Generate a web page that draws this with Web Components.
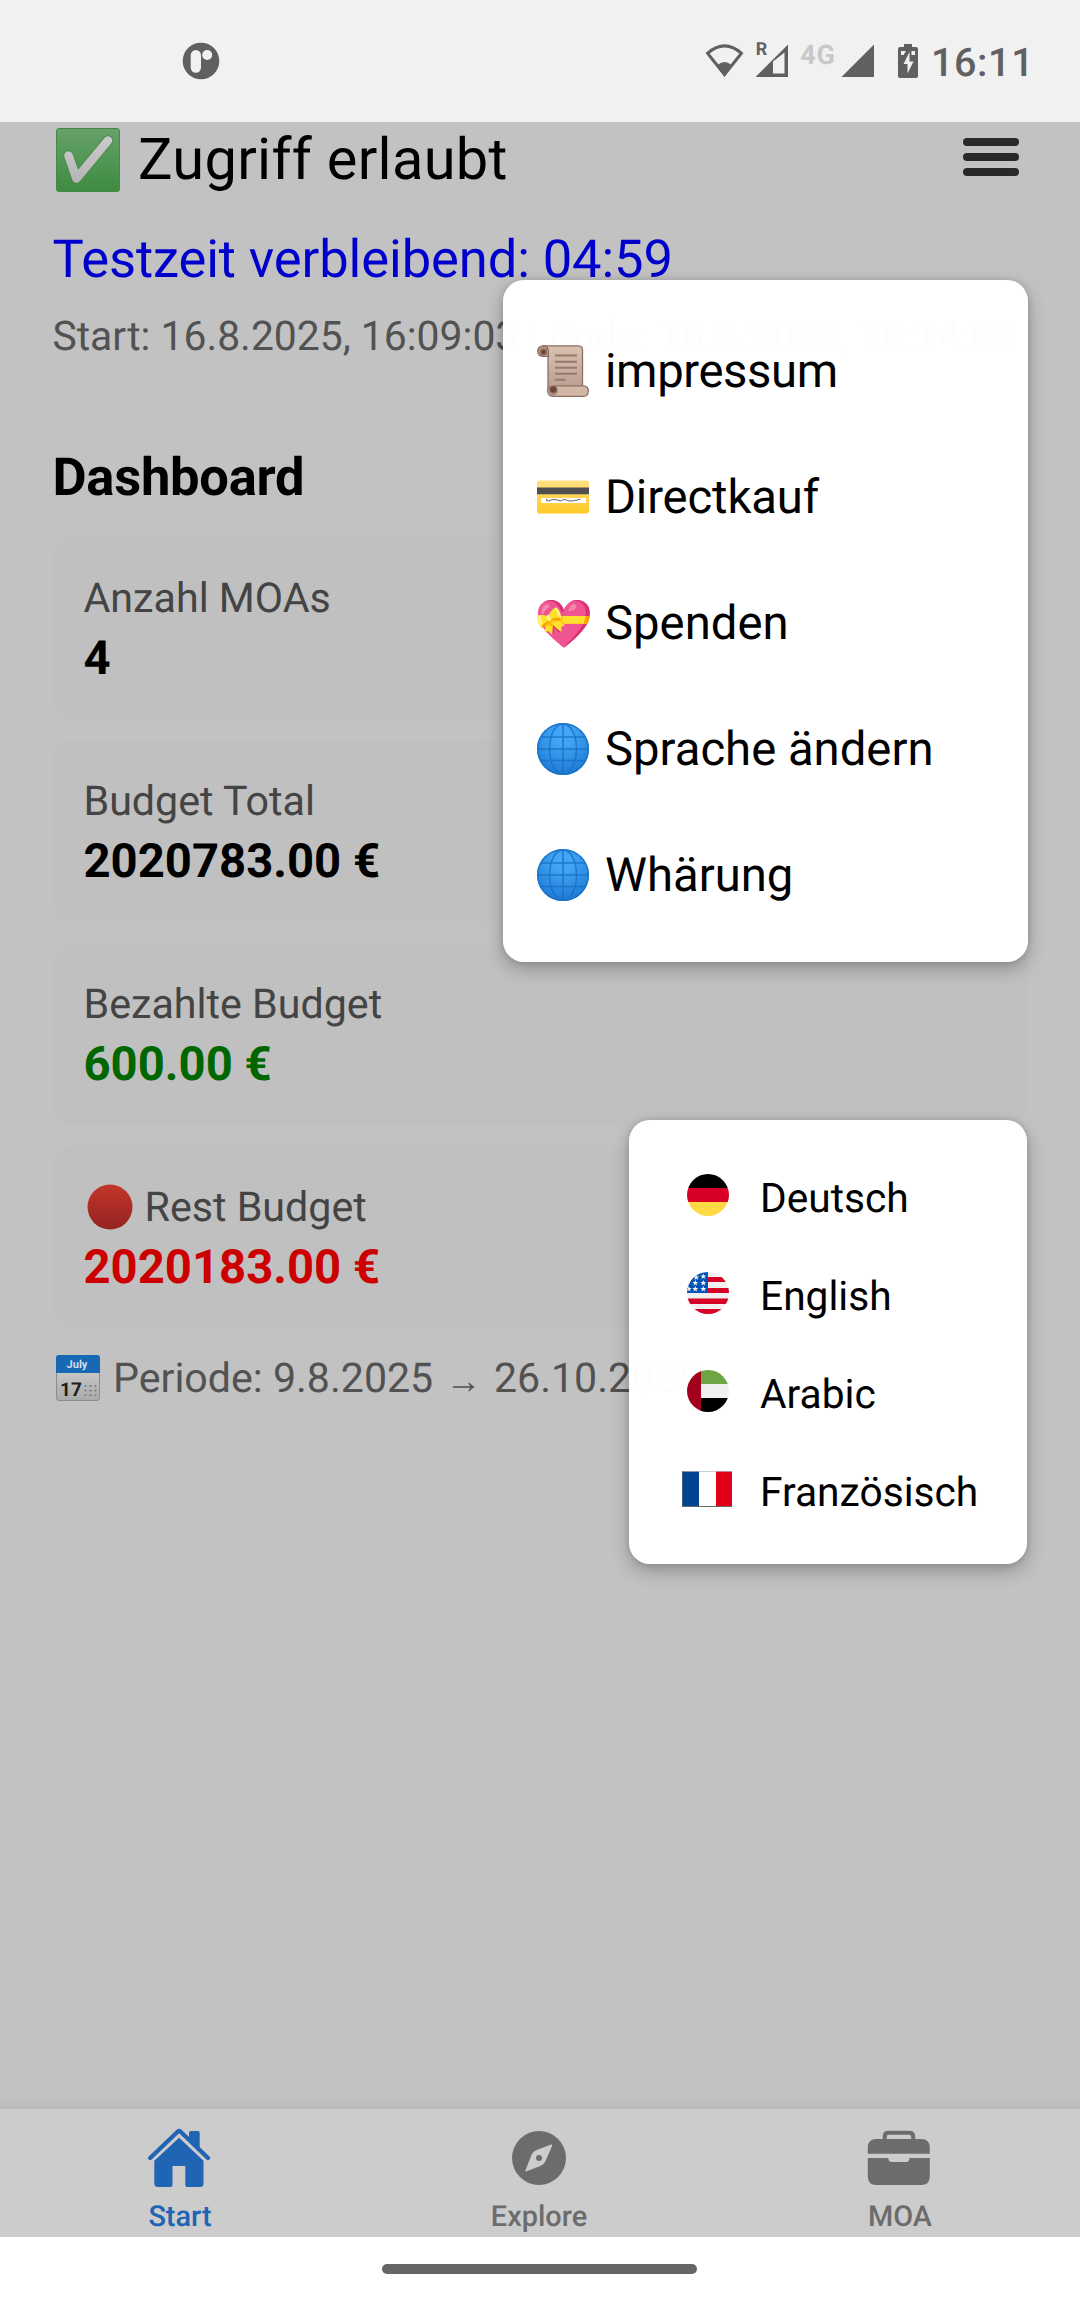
<!DOCTYPE html>
<html lang="de">
<head>
<meta charset="utf-8">
<title>Dashboard</title>
<style>
html,body{margin:0;padding:0}
body{width:1080px;height:2300px;overflow:hidden;font-family:Roboto,sans-serif;text-rendering:geometricPrecision;color:#000;background:#c2c2c2}
</style>
</head>
<body>
<phone-screen></phone-screen>
<script>
const ICONS = {
check:`<svg viewBox="0 0 64 64"><defs><linearGradient id="a" x2="0" y2="1"><stop stop-color="#66a16a"/><stop offset="1" stop-color="#3d8c40"/></linearGradient><linearGradient id="b" x2="0" y2="1"><stop stop-color="#cacaca"/><stop offset="1" stop-color="#b6b6b6"/></linearGradient></defs><rect x=".5" y=".5" width="63" height="63" rx="2.5" fill="url(#a)" stroke="#438a47"/><path d="M12.5 27.500L20.500 50.500L52 12.500" fill="none" stroke="#4a8a4d" stroke-width="10.500" stroke-linecap="round" stroke-linejoin="round"/><path d="M12.500 27.500L20.500 50.500L52 12.500" fill="none" stroke="url(#b)" stroke-width="8.600" stroke-linecap="round" stroke-linejoin="round"/></svg>`,
scroll:`<svg viewBox="0 0 52 52"><defs><linearGradient id="a" x2="0" y2="1"><stop stop-color="#d9c2b1"/><stop offset="1" stop-color="#b99d92"/></linearGradient></defs><path d="M6 .8H41.500Q45.500 1 45.500 5V40L46 45H11V10Z" fill="url(#a)" stroke="#8f6e63" stroke-width="1.300"/><path d="M7 .8Q11.500 1.500 11.500 7V11.500H6Q.7 11 .7 6Q1 1 7 .8Z" fill="#b79a8c" stroke="#8b675b" stroke-width="1.200"/><circle cx="6.500" cy="7" r="3.600" fill="#8a6459"/><circle cx="6.500" cy="7" r="1.700" fill="#613c33"/><path d="M17 40.800H46.500Q51.300 41 51.300 46Q51 51.300 46.500 51.400H16Q10.700 51 10.700 46Q11 41 17 40.800Z" fill="#d2b7a7" stroke="#8f6e63" stroke-width="1.200"/><circle cx="16.300" cy="45.500" r="4.700" fill="#a88779"/><circle cx="16.300" cy="44.500" r="3.200" fill="#6b453b"/><path d="M18 10.500H40M18 16.700H40M18 22.700H40M18 28.800H40M18 34.700H28.500" stroke="#98786c" stroke-width="2"/></svg>`,
card:`<svg viewBox="0 0 52 52"><defs><linearGradient id="a" x2="0" y2="1"><stop stop-color="#ffe082"/><stop offset=".5" stop-color="#ffd54f"/><stop offset="1" stop-color="#ffca28"/></linearGradient></defs><rect y="9.500" width="52" height="33" rx="2.200" fill="url(#a)"/><path d="M0 16.500H52V23.200H0Z" fill="#504f4f"/><path d="M4 27H49V32H4Z" fill="#fff"/><path d="M9.500 27.800Q9 30.500 11.500 30Q15 28 18 28.500T23.500 30Q27 27.500 29.500 29T35 30Q38 29.500 43.500 28.200" fill="none" stroke="#555" stroke-width=".9"/></svg>`,
heart:`<svg viewBox="0 0 52 52" style="overflow:visible"><text x="27" y="42.500" text-anchor="middle" style="font:47.25px 'Noto Color Emoji'">💝</text></svg>`,
globe:`<svg viewBox="0 0 52 52"><defs><radialGradient id="a" cx=".5" cy=".25" r=".8"><stop offset=".2" stop-color="#42a5f5"/><stop offset="1" stop-color="#1976d2"/></radialGradient></defs><circle cx="26" cy="26" r="26" fill="url(#a)"/><g fill="none" stroke="#1a72c4" stroke-width="1.500" opacity=".85"><circle cx="26" cy="26" r="25.300"/><ellipse cx="26" cy="26" rx="13.500" ry="25.300"/><path d="M26 0V52M0 26H52M4 14H48M4 37.500H48"/></g></svg>`,
red:`<svg viewBox="0 0 46 46"><defs><linearGradient id="a" x2="0" y2="1"><stop stop-color="#c3352b"/><stop offset="1" stop-color="#942321"/></linearGradient></defs><circle cx="23" cy="23" r="22.500" fill="url(#a)"/></svg>`,
calendar:`<svg viewBox="0 0 44 46"><defs><linearGradient id="a" x2="0" y2="1"><stop stop-color="#b3b3b3"/><stop offset=".3" stop-color="#cacaca"/><stop offset="1" stop-color="#a9a9a9"/></linearGradient></defs><rect x=".5" y=".5" width="43" height="45" rx="2.500" fill="url(#a)" stroke="#8c8c8c"/><path d="M0 18V3Q0 0 3 0H41Q44 0 44 3V18Z" fill="#1769b4"/><text x="21" y="13" font-size="11" font-weight="700" text-anchor="middle" fill="#d5dfe9">July</text><text x="15" y="40.500" font-size="19" font-weight="700" text-anchor="middle" fill="#1c1c1c">17</text><path d="M29.500 30V41M34.500 30V41M39.500 30V41" stroke="#777" stroke-width="1.800" stroke-dasharray="1.800 3"/></svg>`,
de:`<svg viewBox="0 0 42 42"><clipPath id="c"><circle cx="21" cy="21" r="21"/></clipPath><g clip-path="url(#c)"><path d="M0 0H42V14H0Z"/><path d="M0 14H42V28H0Z" fill="#d80027"/><path d="M0 28H42V42H0Z" fill="#ffda44"/></g></svg>`,
us:`<svg viewBox="0 0 42 42"><clipPath id="c"><circle cx="21" cy="21" r="21"/></clipPath><g clip-path="url(#c)"><path d="M0 0H42V42H0Z" fill="#f0f0f0"/><path d="M0 5H42V10H0ZM0 16H42V21H0ZM0 26.500H42V32H0ZM0 37H42V42H0Z" fill="#d80027"/><path d="M0 0H21V21H0Z" fill="#0052b4"/><g fill="#f0f0f0"><path id="s" d="M16.300 1.500L17.100 3.600H19.300L17.500 5L18.200 7L16.300 5.800L14.400 7L15.100 5L13.300 3.600H15.500Z"/><use href="#s" y="6.500"/><use href="#s" y="12.500"/><use href="#s" x="-8" y="6.500"/><use href="#s" x="-8" y="12.500"/><use href="#s" x="-14.500" y="12.500"/><use href="#s" x="-7" y="1"/></g></g></svg>`,
ae:`<svg viewBox="0 0 42 42"><clipPath id="c"><circle cx="21" cy="21" r="21"/></clipPath><g clip-path="url(#c)"><path d="M0 0H42V42H0Z" fill="#f0f0f0"/><path d="M14 0H42V14H14Z" fill="#6da544"/><path d="M14 28H42V42H14Z"/><path d="M0 0H14V42H0Z" fill="#a2001d"/></g></svg>`,
fr:`<svg viewBox="0 0 50 36"><path d="M0 0H50V36H0Z" fill="#fff"/><path d="M0 0H17V36H0Z" fill="#004494"/><path d="M34 0H50V36H34Z" fill="#e1001a"/><path d="M0 .4H50" stroke="#bbb" stroke-width=".8"/><path d="M.4 0V36" stroke="#667" stroke-width=".8"/><path d="M0 35.500H50" stroke="#666"/></svg>`,
home:`<svg viewBox="0 0 72 72" fill="currentColor"><path d="M6.200 36L34.100 9.300Q35.100 8.500 36.100 9.300L64 36" fill="none" stroke="currentColor" stroke-width="4.300" stroke-linecap="round"/><path d="M45 15.500V11Q45 9 47 9H53.700Q55.700 9 55.700 11V26L45 16Z"/><path d="M35.100 15.700L59.500 38.700V61.500Q59.500 65 56 65H43Q41.300 65 41.300 63V44H28.500V63Q28.500 65 26.800 65H14Q10.300 65 10.300 61.500V38.700Z"/></svg>`,
compass:`<svg viewBox="0 0 72 72"><circle cx="36" cy="36" r="27" fill="currentColor"/><path transform="translate(36 36)" d="M12.200-13.500Q13.600-13.800 13.300-12.500L6.200 3.800Q4.700 7 .8 8.300L-13 13.600Q-14 13.600-13.600 12.500L-7.200-3.800Q-5.800-7-1.800-8.300Z" fill="#ccc"/><circle cx="36" cy="36" r="3" fill="currentColor"/></svg>`,
brief:`<svg viewBox="0 0 72 72" fill="currentColor"><path d="M3.800 31.700V25.500Q3.800 17 12.300 17H57.300Q65.800 17 65.800 25.500V31.700Z"/><path d="M3.800 36H24.300Q24.500 40 27.500 40H42.500Q45.300 40 45.600 36H65.800V54.500Q65.800 63 57.300 63H12.300Q3.800 63 3.800 54.500Z"/><path d="M20.700 18V14.500Q20.700 10.700 24.500 10.700H45.300Q49.200 10.700 49.200 14.500V18" fill="none" stroke="currentColor" stroke-width="4.100"/></svg>`,
};
function define(name, css, html){
  customElements.define(name, class extends HTMLElement{
    constructor(){
      super();
      const r=this.attachShadow({mode:'open'});
      r.innerHTML=`<style>:host{display:block;box-sizing:border-box}${css}</style>${html}`;
    }
  });
}
customElements.define('ui-icon', class extends HTMLElement{
  connectedCallback(){
    if(this.shadowRoot) return;
    this.attachShadow({mode:'open'}).innerHTML=`<style>:host{display:block;flex:none}svg{display:block;width:100%;height:100%}</style>${ICONS[this.getAttribute('name')]}`;
  }
});
define('status-bar',`:host{height:122px;background:#f1f1f1;color:#606060}
.row{display:flex;height:122px;align-items:flex-start}
svg{display:block;flex:none}
.clock{font-size:39.5px;line-height:46px;font-weight:500;letter-spacing:.6px;margin:40px 0 0 11px}
`,`<div class="row">
<svg style="margin:42px 0 0 182px" width="38" height="38" viewBox="0 0 38 38"><circle cx="19" cy="19" r="18.300" fill="#606060"/><rect x="8.700" y="8" width="10.300" height="22.700" rx="5.150" fill="#f1f1f1"/><circle cx="25.200" cy="13" r="5" fill="#f1f1f1"/></svg>
<svg style="margin:40px 0 0 480px" width="220" height="40" viewBox="700 40 220 40" fill="#606060"><path d="M707.500 53.300Q724.500 38.500 741.500 53.300L724.500 74.500Z" fill="none" stroke="#606060" stroke-width="3"/><path d="M717.500 65Q724.500 59 731.500 65L724.500 76.500Z"/>
<text x="755.800" y="55.200" font-size="18" font-weight="700">R</text>
<path fill-rule="evenodd" d="M755.500 77L788 44.500V77ZM773 61.500V73.500H784.500V52.500Z"/>
<text x="800.300" y="63.700" font-size="27" font-weight="700" letter-spacing=".6" fill="#c8c8c8">4G</text>
<path d="M841.500 77L874 44.500V77Z"/>
<path fill-rule="evenodd" d="M904 44H912V47H916Q918 47 918 49V76Q918 78 916 78H900Q898 78 898 76V49Q898 47 900 47H904Z"/><path d="M901 51H906L903.500 55H901ZM911.500 51H915V55H911.500Z" fill="#f1f1f1"/><path d="M909.500 52L903.500 64H907.500V73.500L913.500 61.500H909.500Z" fill="#f1f1f1"/></svg>
<span class="clock">16:11</span></div>`);
define('menu-button',`:host{display:flex;flex-direction:column;gap:7px;width:56px}
i{display:block;height:8px;border-radius:4px;background:#292929}`,`<i></i><i></i><i></i>`);
define('stat-card',`:host{height:182px;border-radius:21px;background:#c0c0c0;padding:36px 31px 0}
.l{display:flex;gap:12px;font-size:41.2px;line-height:52px;color:#444;white-space:nowrap}
.v{font-size:47.25px;line-height:56px;font-weight:700;margin-top:5px;white-space:nowrap}
::slotted(ui-icon){width:46px;height:46px;margin:2px 0 0 3px}`,
`<div class="l"><slot name="icon"></slot><slot name="label"></slot></div><div class="v"><slot></slot></div>`);
define('menu-item',`:host{display:flex;align-items:center;height:126px;gap:16px;font-size:47.25px;line-height:56px;white-space:nowrap}
::slotted(ui-icon){width:52px;height:52px}`,`<slot name="icon"></slot><span><slot></slot></span>`);
define('lang-item',`:host{display:flex;align-items:center;height:98px;font-size:40.7px;line-height:50px;white-space:nowrap}
.f{width:50px;margin-right:27px;display:flex;justify-content:center}
.t{padding-top:2px}
::slotted(ui-icon){width:42px;height:42px;margin-bottom:4px}
::slotted(ui-icon[name=fr]){width:50px;height:36px;margin-right:2px}`,`<span class="f"><slot name="icon"></slot></span><span class="t"><slot></slot></span>`);
define('pop-up',`:host{background:rgba(255,255,255,.993);border-radius:21px;box-shadow:0 7px 18px rgba(0,0,0,.26),0 0 6px rgba(0,0,0,.12)}`,`<slot></slot>`);
define('tab-item',`:host{display:flex;flex-direction:column;align-items:center;width:360px;padding-top:13px;color:#6c6c6c;font-size:28.9px;line-height:34px;font-weight:500}
:host([active]){color:#2064b4}
::slotted(ui-icon){width:72px;height:72px;margin-bottom:6px}`,`<slot name="icon"></slot><span><slot></slot></span>`);
define('tab-bar',`:host{display:flex;height:130px;border-top:2px solid #b8b8b8;background:#ccc;box-shadow:0 -2px 8px rgba(0,0,0,.05)}
::slotted(tab-item:nth-child(2)){padding-right:2px}`,`<slot></slot>`);
define('phone-screen',`:host{position:relative;display:flex;flex-direction:column;width:1080px;height:2300px;background:#c2c2c2}
main{flex:1;padding:0 52.5px;display:flex;flex-direction:column}
header{display:flex;height:76px;align-items:flex-start}
header ui-icon{width:64px;height:64px;margin:6px 18px 0 3.500px}
h1{margin:3.600px 0 0;font-size:57.75px;line-height:68px;font-weight:400;letter-spacing:.3px;flex:1}
menu-button{margin:16px 9px 0 0}
.time{margin-top:30px;font-size:52.5px;line-height:62px;letter-spacing:-.11px;color:#0000cc;white-space:nowrap}
.range{margin-top:19.500px;font-size:40.85px;line-height:52px;color:#525252;white-space:nowrap}
h2{margin:84px 0 0;font-size:52.5px;line-height:62px;font-weight:700;letter-spacing:-.25px}
.cards{display:flex;flex-direction:column;gap:21px;margin-top:29.500px}
.period{display:flex;margin-top:25px;font-size:41.1px;line-height:52px;color:#525252;white-space:nowrap}
.period ui-icon{width:44px;height:46px;margin:2px 13px 0 3.500px}
.period b{font:400 36px/55px "Liberation Sans";height:50px;width:40px;text-align:center;margin:0 10.400px}
.system{height:63px;background:#fff;display:flex;justify-content:center;padding-right:2px}
.system i{width:315px;height:10px;border-radius:5px;background:#666;margin-top:27px}
.menu,.langs{position:absolute}
.menu{left:503px;top:280px;width:525px;height:682px;padding:27.500px 34px 0}
.langs{left:629px;top:1120px;width:398px;height:444px;padding:28px 0 0 54px}
.menu menu-item:nth-child(1){letter-spacing:-.4px}
.menu menu-item:nth-child(2){letter-spacing:-.15px}
.green{color:#006600}.red{color:#cc0000}`,
`<status-bar></status-bar>
<main>
<header><ui-icon name="check"></ui-icon><h1>Zugriff erlaubt</h1><menu-button></menu-button></header>
<div class="time">Testzeit verbleibend: 04:59</div>
<div class="range">Start: 16.8.2025, 16:09:03 | Ende: 16.8.2025, 16:14:03</div>
<h2>Dashboard</h2>
<div class="cards">
<stat-card><span slot="label">Anzahl MOAs</span>4</stat-card>
<stat-card><span slot="label">Budget Total</span>2020783.00 €</stat-card>
<stat-card><span slot="label">Bezahlte Budget</span><span class="green">600.00 €</span></stat-card>
<stat-card><ui-icon slot="icon" name="red"></ui-icon><span slot="label">Rest Budget</span><span class="red">2020183.00 €</span></stat-card>
</div>
<div class="period"><ui-icon name="calendar"></ui-icon><span>Periode: 9.8.2025</span><b>→</b><span>26.10.2025</span></div>
</main>
<tab-bar>
<tab-item active><ui-icon slot="icon" name="home"></ui-icon>Start</tab-item>
<tab-item><ui-icon slot="icon" name="compass"></ui-icon>Explore</tab-item>
<tab-item><ui-icon slot="icon" name="brief"></ui-icon>MOA</tab-item>
</tab-bar>
<div class="system"><i></i></div>
<pop-up class="menu">
<menu-item><ui-icon slot="icon" name="scroll"></ui-icon>impressum</menu-item>
<menu-item><ui-icon slot="icon" name="card"></ui-icon>Directkauf</menu-item>
<menu-item><ui-icon slot="icon" name="heart"></ui-icon>Spenden</menu-item>
<menu-item><ui-icon slot="icon" name="globe"></ui-icon>Sprache ändern</menu-item>
<menu-item><ui-icon slot="icon" name="globe"></ui-icon>Whärung</menu-item>
</pop-up>
<pop-up class="langs">
<lang-item><ui-icon slot="icon" name="de"></ui-icon>Deutsch</lang-item>
<lang-item><ui-icon slot="icon" name="us"></ui-icon>English</lang-item>
<lang-item><ui-icon slot="icon" name="ae"></ui-icon>Arabic</lang-item>
<lang-item><ui-icon slot="icon" name="fr"></ui-icon>Französisch</lang-item>
</pop-up>`);
</script>
</body>
</html>
